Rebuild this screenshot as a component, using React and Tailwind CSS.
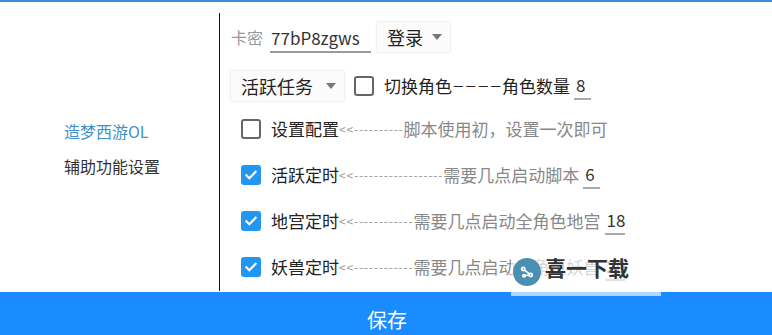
import React from 'react';

const font = { fontFamily: '"Noto Sans CJK SC", "Noto Sans", sans-serif' };

const Check = ({ checked }) =>
  checked ? (
    <div className="w-[20px] h-[20px] rounded-[3px] bg-[#2196f3] flex items-center justify-center shrink-0">
      <svg width="14" height="14" viewBox="0 0 24 24" fill="none" stroke="white" strokeWidth="3.5" strokeLinecap="square">
        <path d="M4 12.5l5 5L20 6.5" />
      </svg>
    </div>
  ) : (
    <div className="w-[20px] h-[20px] rounded-[3px] border-2 border-[#666] bg-white shrink-0" />
  );

const Spinner = ({ label, w }) => (
  <div className={`flex items-center h-[30px] ${w} bg-[#fbfbfb] shadow-[0_0_2px_rgba(0,0,0,0.18)] pl-[10px] pr-[8px] justify-between`}>
    <span className="text-[18px] text-[#222] leading-none">{label}</span>
    <span className="w-0 h-0 border-l-[5px] border-r-[5px] border-t-[6px] border-l-transparent border-r-transparent border-t-[#777]" />
  </div>
);

const Num = ({ v, w }) => (
  <span className={`ml-[4px] ${w} border-b-2 border-[#aaa] text-[17px] text-[#333] leading-[26px] pl-[2px]`}>{v}</span>
);

const TimerRow = ({ label, dashes, desc, v, w, checked }) => (
  <div className="h-[46px] flex items-center pl-[10px]">
    <Check checked={checked} />
    <span className="ml-[10px] text-[17px] text-[#222] whitespace-nowrap">{label}</span>
    <span className="text-[12px] text-[#999] whitespace-nowrap tracking-[0.8px]">{dashes}</span>
    <span className="text-[17px] text-[#888] whitespace-nowrap">{desc}</span>
    {v !== undefined && <Num v={v} w={w} />}
  </div>
);

export default function App() {
  return (
    <div className="w-[772px] h-[335px] bg-white relative overflow-hidden flex flex-col" style={font}>
      <div className="h-[2px] bg-[#3d8ed6] shrink-0" />
      <div className="flex h-[290px] overflow-hidden">
        {/* left menu */}
        <div className="w-[219px] pl-[64px] pt-[115px] flex flex-col shrink-0">
          <span className="text-[16px] text-[#3f8fcf] leading-[28px]">造梦西游OL</span>
          <span className="text-[16px] text-[#333] leading-[28px] mt-[7px]">辅助功能设置</span>
        </div>
        <div className="w-px bg-[#111] mt-[11px] h-[278px] shrink-0" />
        {/* right settings */}
        <div className="flex-1 pl-[11px] pt-[12px] flex flex-col">
          <div className="h-[46px] flex items-center">
            <span className="text-[16px] text-[#999]">卡密</span>
            <span className="ml-[7px] w-[101px] border-b-2 border-[#9a9a9a] text-[17px] text-[#333] leading-[26px] pl-[1px] mt-[4px]">77bP8zgws</span>
            <div className="ml-[6px]">
              <Spinner label="登录" w="w-[73px]" />
            </div>
          </div>
          <div className="h-[46px] flex items-center pt-[6px]">
            <Spinner label="活跃任务" w="w-[113px]" />
            <div className="ml-[10px]"><Check /></div>
            <span className="ml-[10px] text-[17px] text-[#222] whitespace-nowrap">切换角色</span>
            <span className="text-[12.5px] text-[#222] whitespace-nowrap">－－－－</span>
            <span className="text-[17px] text-[#222] whitespace-nowrap">角色数量</span>
            <Num v="8" w="w-[17px]" />
          </div>
          <TimerRow label="设置配置" dashes="<<----------" desc="脚本使用初，设置一次即可" />
          <TimerRow checked label="活跃定时" dashes="<<------------------" desc="需要几点启动脚本" v="6" w="w-[17px]" />
          <TimerRow checked label="地宫定时" dashes="<<------------" desc="需要几点启动全角色地宫" v="18" w="w-[20px]" />
          <TimerRow checked label="妖兽定时" dashes="<<------------" desc="需要几点启动全角色妖兽" v="20" w="w-[20px]" />
        </div>
      </div>
      <div className="flex-1 bg-[#1a8cff] flex justify-center pt-[14px]">
        <span className="text-[20px] text-white leading-[28px] pl-[2px]">保存</span>
      </div>

      {/* watermark overlay */}
      <div className="absolute left-[511px] top-[243px] w-[150px] h-[53px] bg-white/65 flex items-center pl-[2px]">
        <div className="w-[28px] h-[28px] rounded-full bg-[#4b8fb3] flex items-center justify-center mt-[4px] shrink-0">
          <svg width="18" height="18" viewBox="0 0 24 24" fill="none" stroke="white" strokeWidth="2.2" strokeLinecap="round">
            <circle cx="7" cy="8" r="2.2" />
            <circle cx="17" cy="16" r="2.2" />
            <circle cx="8" cy="17" r="1.6" />
            <path d="M8.8 9.6l6.4 5" />
            <path d="M9.6 16.6l5.2-0.5" />
          </svg>
        </div>
        <span className="ml-[4px] text-[21px] font-bold text-[#333] leading-none -mt-[4px]">喜一下载</span>
      </div>
    </div>
  );
}
